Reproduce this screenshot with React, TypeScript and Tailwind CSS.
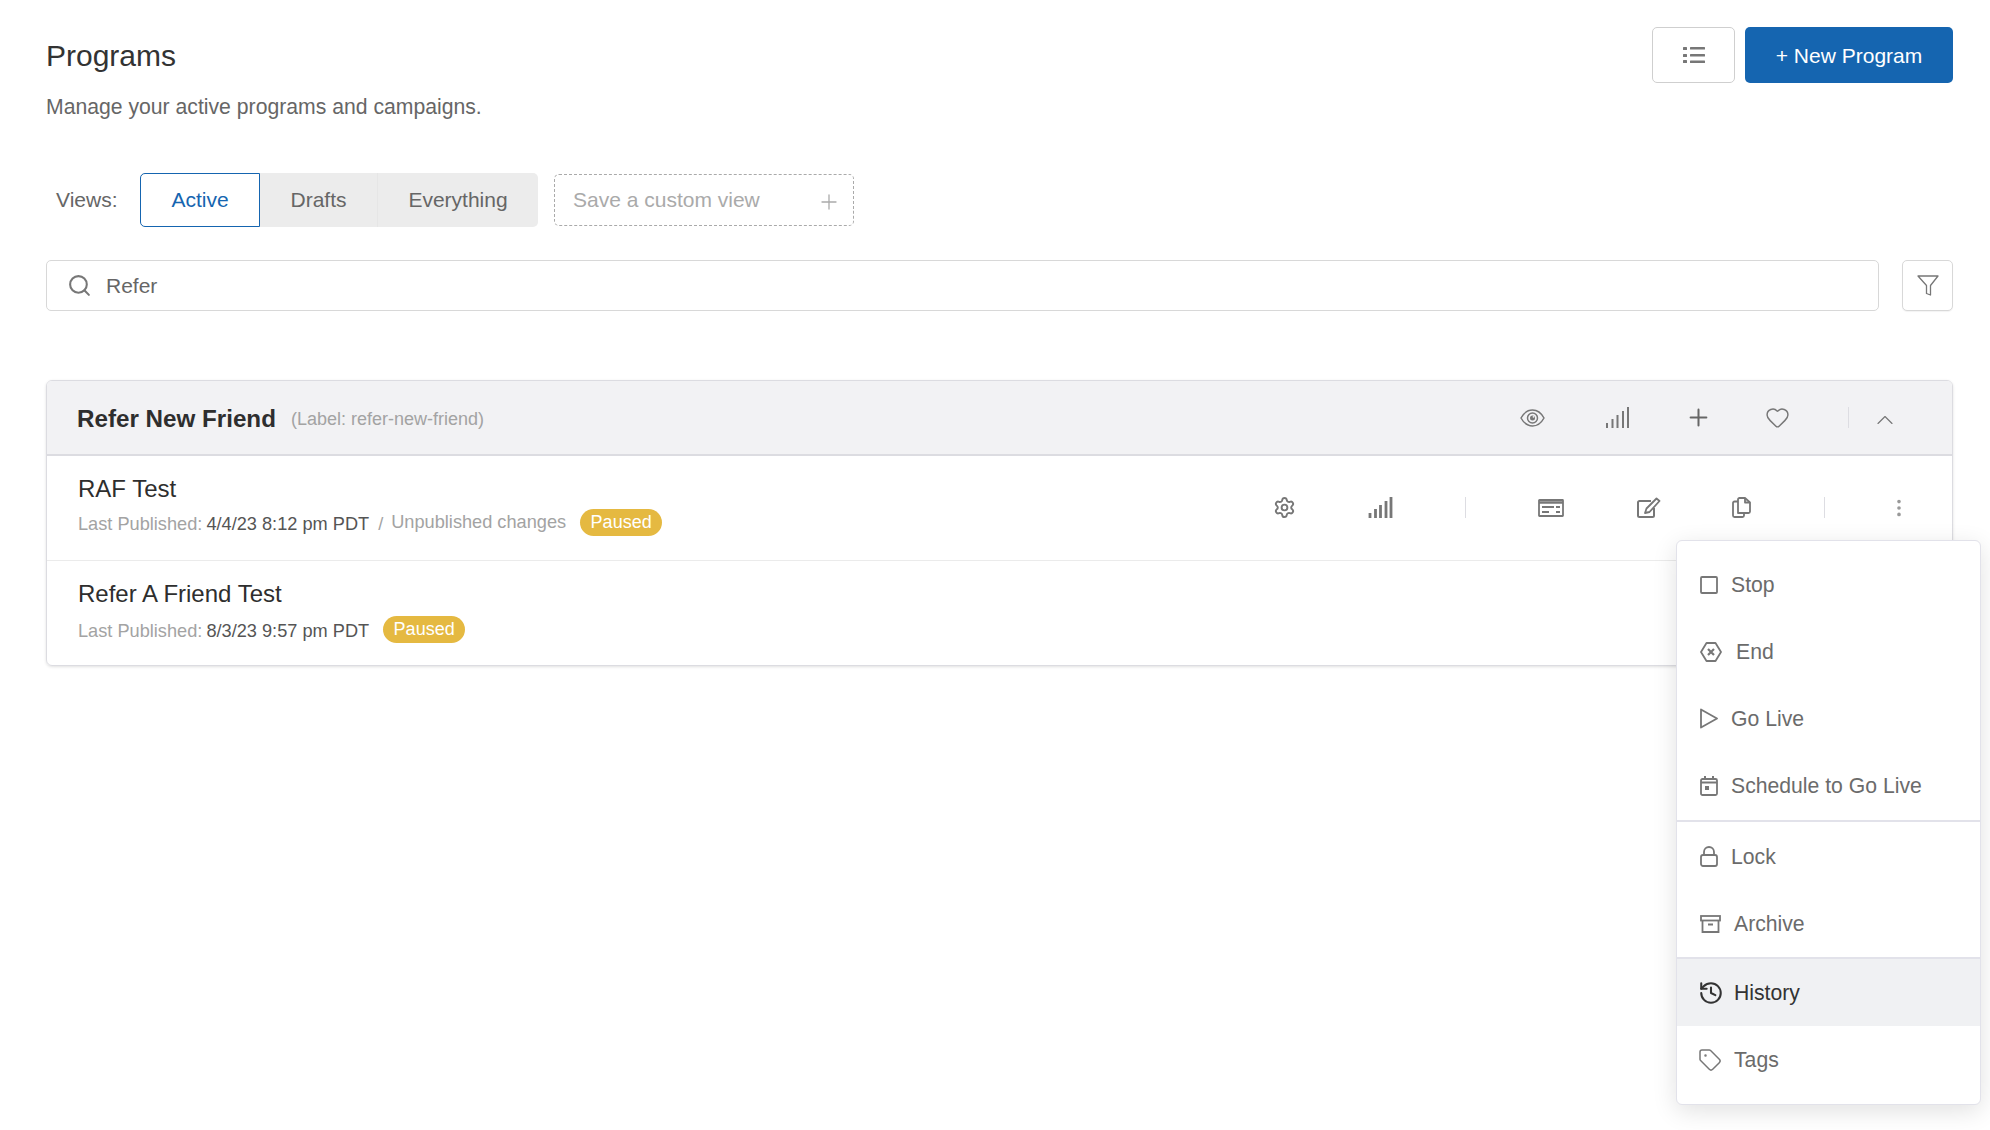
import React from "react";
import { Settings, History, Tag, Plus, Heart, ChevronUp, Search, MoreVertical } from "lucide-react";

const Signal = ({ w = 2 }: { w?: number }) => (
  <svg width="25" height="21" viewBox="0 0 25 21" fill="none" stroke="#777" strokeWidth={w}>
    <path d="M2 21V16M7.500 21V12M12.500 21V8M18 21V4M23 21V0" />
  </svg>
);

const EyeIcon = () => (
  <svg width="25" height="18" viewBox="0 0 25 18" fill="none" stroke="#777" strokeWidth="1.500">
    <path d="M1 9C4 3.500 8 1 12.500 1S21 3.500 24 9c-3 5.500-7 8-11.500 8S4 14.500 1 9Z" />
    <circle cx="12.500" cy="9" r="5" />
    <circle cx="12.500" cy="9" r="2.500" fill="#777" stroke="none" />
    <circle cx="13.500" cy="7.800" r="0.900" fill="#f2f2f4" stroke="none" />
  </svg>
);

const CardIcon = () => (
  <svg width="26" height="18" viewBox="0 0 26 18" fill="none" stroke="#777" strokeWidth="1.800">
    <rect x="1" y="1" width="24" height="16" rx="0.500" />
    <path d="M1 3.500h24" strokeWidth="2.600" />
    <path d="M4 8h12M18 8h4M4 13h7M18 13h4" />
  </svg>
);

const EditIcon = () => (
  <svg width="24" height="21" viewBox="0 0 24 21" fill="none" stroke="#777" strokeWidth="2" strokeLinejoin="round">
    <path d="M14 4H2.500A1.500 1.500 0 0 0 1 5.500V18.500A1.500 1.500 0 0 0 2.500 20H15.500A1.500 1.500 0 0 0 17 18.500V11" />
    <path d="M19.500 1.500 22.500 4 12.500 15 8 16 9.500 11.500Z" strokeWidth="1.800" />
  </svg>
);

const CopyIcon = () => (
  <svg width="19" height="21" viewBox="0 0 19 21" fill="none" stroke="#777" strokeWidth="1.800" strokeLinejoin="round">
    <path d="M6 16V2.500A1.500 1.500 0 0 1 7.500 1H13l5 4.500v9A1.500 1.500 0 0 1 16.500 16Z" />
    <path d="M13 1v4.500h5" />
    <path d="M6 4.500H2.500A1.500 1.500 0 0 0 1 6v12.500A1.500 1.500 0 0 0 2.500 20h8a1.500 1.500 0 0 0 1.500-1.500V16" />
  </svg>
);

const HexX = () => (
  <svg width="22" height="20" viewBox="0 0 22 20" fill="none" stroke="#777" strokeWidth="1.800" strokeLinejoin="round" className="shrink-0">
    <path d="M6.500 1h9L21 10l-5.500 9h-9L1 10Z" />
    <path d="M8 7l6 6M14 7l-6 6" strokeWidth="2.200" />
  </svg>
);

const CalIcon = () => (
  <svg width="18" height="20" viewBox="0 0 18 20" fill="none" stroke="#777" strokeWidth="1.800" className="shrink-0">
    <rect x="1" y="3" width="16" height="16" rx="1.500" />
    <path d="M1 6.500h16" strokeWidth="2" />
    <path d="M5 0v4M13 0v4" strokeWidth="2" />
    <rect x="5" y="10" width="4" height="4" fill="#777" stroke="none" />
  </svg>
);

const SquareIcon = () => (
  <svg width="18" height="18" viewBox="0 0 18 18" fill="none" stroke="#777" strokeWidth="1.800" className="shrink-0">
    <rect x="1" y="1" width="16" height="16" rx="1" />
  </svg>
);

const PlayIcon = () => (
  <svg width="18" height="21" viewBox="0 0 18 21" fill="none" stroke="#777" strokeWidth="1.800" strokeLinejoin="round" className="shrink-0">
    <path d="M1 1.500 17 10.500 1 19.500Z" />
  </svg>
);

const LockIcon = () => (
  <svg width="18" height="21" viewBox="0 0 18 21" fill="none" stroke="#777" strokeWidth="1.800" className="shrink-0">
    <rect x="1" y="9" width="16" height="11" rx="2" />
    <path d="M4 9V6a5 5 0 0 1 10 0v3" />
  </svg>
);

const ArchiveIcon = () => (
  <svg width="21" height="18" viewBox="0 0 21 18" fill="none" stroke="#777" strokeWidth="1.800" className="shrink-0">
    <rect x="1" y="1" width="19" height="4.500" />
    <path d="M2.500 5.500V17h16V5.500M8 9.500h5" />
  </svg>
);

const ListIcon = () => (
  <svg width="22" height="18" viewBox="0 0 22 18" fill="#777">
    <rect x="0" y="1" width="4" height="3" rx="0.500" />
    <rect x="0" y="8" width="4" height="3" rx="0.500" />
    <rect x="0" y="14" width="4" height="3" rx="0.500" />
    <rect x="7" y="1" width="15" height="2.500" rx="0.500" />
    <rect x="7" y="8" width="15" height="2.500" rx="0.500" />
    <rect x="7" y="14.500" width="15" height="2.500" rx="0.500" />
  </svg>
);

const FunnelIcon = () => (
  <svg width="22" height="22" viewBox="0 0 22 22" fill="none" stroke="#777" strokeWidth="1.300" strokeLinejoin="round">
    <path d="M1 1h20L13.500 10.500V20l-4-1.500v-8Z" />
  </svg>
);

const Cell = ({ w, children }: { w: string; children: React.ReactNode }) => (
  <div className={`${w} flex items-center justify-center`}>{children}</div>
);

const Divider = () => <div className="h-[21px] w-px bg-[#dddde2]" />;

const Badge = () => (
  <span className="flex h-[27px] w-[82px] items-center justify-center rounded-full bg-[#e5b941] text-[18px] text-white">Paused</span>
);

const MenuItem = ({ icon, label, textClass, active }: { icon: React.ReactNode; label: string; textClass: string; active?: boolean }) => (
  <div className={`flex h-[67px] items-center pl-[23px] text-[21.200px] ${active ? "bg-[#f0f1f3] text-[#333]" : "text-[#6b6b6b]"}`}>
    <span className="flex w-[22px] items-center justify-start">{icon}</span>
    <span className={textClass}>{label}</span>
  </div>
);

export default function App() {
  return (
    <div className="relative h-[1130px] w-[1990px] overflow-hidden bg-white pl-[46px] pr-[37px] font-['Liberation_Sans',Arial,sans-serif]">
      <div className="flex items-start justify-between pt-[27px]">
        <div>
          <h1 className="mt-[12px] text-[30px] leading-[34px] text-[#333]">Programs</h1>
          <p className="mt-[21px] text-[21.200px] leading-[26px] text-[#666]">Manage your active programs and campaigns.</p>
        </div>
        <div className="flex gap-[10px]">
          <button className="flex h-[56px] w-[83px] items-center justify-center rounded-[5px] border border-[#cfcfcf] bg-white"><ListIcon /></button>
          <button className="flex h-[56px] w-[208px] items-center justify-center rounded-[5px] bg-[#1565b0] pt-[1px] text-[21px] text-white">+ New Program</button>
        </div>
      </div>

      <div className="mt-[53px] flex items-center">
        <span className="ml-[10px] w-[84px] text-[21px] text-[#666]">Views:</span>
        <div className="flex h-[54px] w-[398px] rounded-[5px] bg-[#ececec] text-[21px] text-[#666]">
          <div className="flex w-[120px] items-center justify-center rounded-l-[5px] border border-[#1565b0] bg-white text-[#1565b0]">Active</div>
          <div className="flex w-[118px] items-center justify-center border-r border-[#e6e6e6]">Drafts</div>
          <div className="flex w-[160px] items-center justify-center">Everything</div>
        </div>
        <div className="ml-[16px] flex h-[52px] w-[300px] items-center justify-between rounded-[5px] border border-dashed border-[#aaa] pl-[18px] pr-[12px] text-[21px] text-[#aaa]">
          <span>Save a custom view</span>
          <Plus size={24} strokeWidth={1.300} className="mt-[3px] text-[#aaa]" />
        </div>
      </div>

      <div className="mt-[33px] flex items-center justify-between">
        <div className="flex h-[51px] w-[1833px] items-center rounded-[5px] border border-[#d8d8d8] pl-[20px] text-[21px] text-[#666]">
          <Search size={25} strokeWidth={2} className="text-[#777]" />
          <span className="ml-[14px]">Refer</span>
        </div>
        <button className="flex h-[51px] w-[51px] items-center justify-center rounded-[5px] border border-[#d8d8d8] bg-white shadow-[0_1px_1px_rgba(0,0,0,0.05)]"><FunnelIcon /></button>
      </div>

      <div className="mt-[69px] overflow-hidden rounded-[6px] border border-[#dcdce1] shadow-[0_1px_3px_rgba(0,0,0,0.12)]">
        <div className="flex h-[75px] items-center justify-between border-b-2 border-[#dcdce1] bg-[#f2f2f4] pl-[30px] pr-[60px]">
          <div className="flex items-baseline">
            <span className="translate-y-[2px] text-[24.200px] font-bold text-[#2e2e2e]">Refer New Friend</span>
            <span className="ml-[15px] text-[18px] text-[#a3a3a3]">(Label: refer-new-friend)</span>
          </div>
          <div className="flex items-center">
            <Cell w="w-[84px]"><EyeIcon /></Cell>
            <Cell w="w-[86px]"><Signal w={2} /></Cell>
            <Cell w="w-[76px]"><Plus size={27} strokeWidth={1.800} className="shrink-0 text-[#666]" /></Cell>
            <Cell w="w-[82px]"><Heart size={25} strokeWidth={1.400} className="text-[#777]" /></Cell>
            <Cell w="w-[60px]"><Divider /></Cell>
            <Cell w="w-[14px]"><ChevronUp size={28} strokeWidth={1} className="mt-[4px] shrink-0 text-[#777]" /></Cell>
          </div>
        </div>

        <div className="flex h-[105px] items-start justify-between border-b border-[#ebebeb] pl-[31px] pr-[18px]">
          <div>
            <div className="mt-[19px] text-[24px] leading-[28px] text-[#2e2e2e]">RAF Test</div>
            <div className="mt-[8px] flex items-center text-[18.200px]">
              <span className="text-[#a3a3a3]">Last Published:</span>
              <span className="ml-[4px] text-[#555]">4/4/23 8:12 pm PDT</span>
              <span className="ml-[9px] text-[#a3a3a3]">/</span>
              <span className="ml-[8px] -translate-y-[2px] text-[#a3a3a3]">Unpublished changes</span>
              <span className="ml-[14px] -translate-y-[2px]"><Badge /></span>
            </div>
          </div>
          <div className="mt-[40px] flex items-center">
            <Cell w="w-[95px]"><Settings size={23} strokeWidth={2} className="text-[#777]" /></Cell>
            <Cell w="w-[96px]"><Signal w={2.800} /></Cell>
            <Cell w="w-[74px]"><Divider /></Cell>
            <Cell w="w-[98px]"><CardIcon /></Cell>
            <Cell w="w-[98px]"><EditIcon /></Cell>
            <Cell w="w-[86px]"><CopyIcon /></Cell>
            <Cell w="w-[80px]"><Divider /></Cell>
            <Cell w="w-[70px]"><MoreVertical size={22} strokeWidth={2} className="text-[#999]" /></Cell>
          </div>
        </div>

        <div className="h-[104px] pl-[31px]">
          <div className="pt-[19px] text-[24px] leading-[28px] text-[#2e2e2e]">Refer A Friend Test</div>
          <div className="mt-[10px] flex items-center text-[18.200px]">
            <span className="text-[#a3a3a3]">Last Published:</span>
            <span className="ml-[4px] text-[#555]">8/3/23 9:57 pm PDT</span>
            <span className="ml-[14px] -translate-y-[2px]"><Badge /></span>
          </div>
        </div>
      </div>

      <div className="absolute left-[1676px] top-[540px] w-[305px] rounded-[6px] border border-[#e2e2ea] bg-white pb-[11px] pt-[10px] shadow-[0_6px_24px_rgba(0,0,0,0.12)]">
        <MenuItem icon={<SquareIcon />} label="Stop" textClass="ml-[9px]" />
        <MenuItem icon={<HexX />} label="End" textClass="ml-[14px]" />
        <MenuItem icon={<PlayIcon />} label="Go Live" textClass="ml-[9px]" />
        <MenuItem icon={<CalIcon />} label="Schedule to Go Live" textClass="ml-[9px]" />
        <div className="my-[1px] h-[2px] bg-[#e2e2ea]" />
        <MenuItem icon={<LockIcon />} label="Lock" textClass="ml-[9px]" />
        <MenuItem icon={<ArchiveIcon />} label="Archive" textClass="ml-[12px]" />
        <div className="h-[2px] bg-[#e2e2ea]" />
        <MenuItem active icon={<History size={26} strokeWidth={1.900} className="-ml-[2px] shrink-0 text-[#333]" />} label="History" textClass="ml-[12px]" />
        <MenuItem icon={<Tag size={24} strokeWidth={1.500} className="-ml-[2px] shrink-0 text-[#777]" />} label="Tags" textClass="ml-[12px]" />
      </div>
    </div>
  );
}
